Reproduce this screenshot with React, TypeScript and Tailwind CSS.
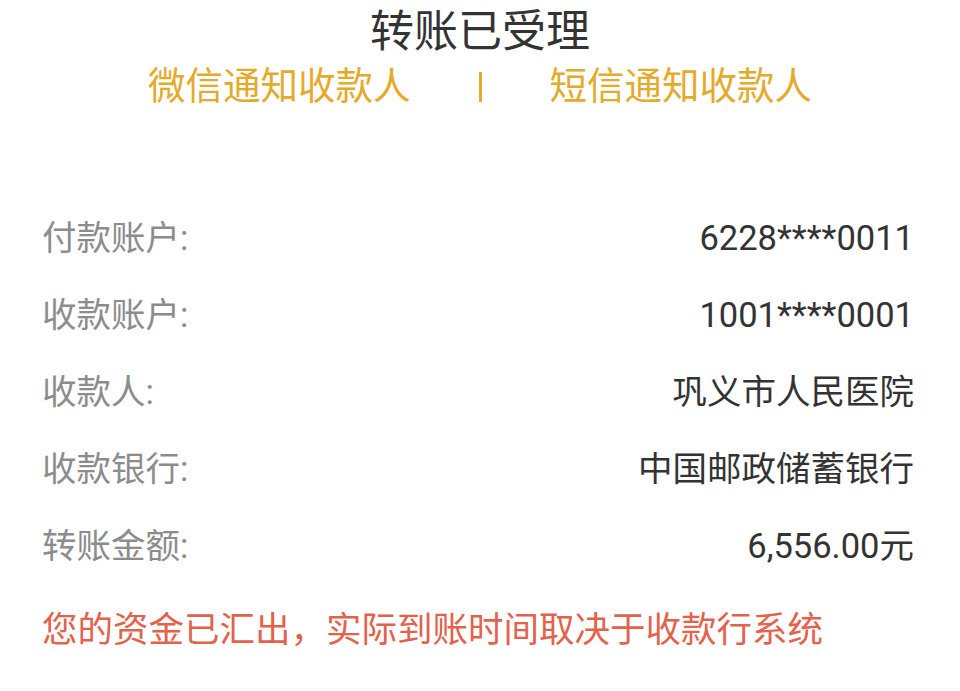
const rows = [
  { label: '付款账户:', value: '6228****0011' },
  { label: '收款账户:', value: '1001****0001' },
  { label: '收款人:', value: '巩义市人民医院' },
  { label: '收款银行:', value: '中国邮政储蓄银行' },
  { label: '转账金额:', value: '6,556.00元' },
]

export default function App() {
  return (
    <main
      className="flex min-h-[691px] w-full flex-col bg-white"
      style={{ fontFamily: 'Roboto, "Noto Sans CJK SC", sans-serif' }}
    >
      <h1 className="mt-[10px] text-center text-[44px] leading-none font-normal text-[#333333]">转账已受理</h1>

      <div className="mt-[14px] flex items-center justify-center text-[37.5px] leading-none text-[#e4aa2c]">
        <span>微信通知收款人</span>
        <span className="mx-[68px] h-[30px] w-[3px] bg-[#e4aa2c]" />
        <span>短信通知收款人</span>
      </div>

      <section className="mt-[95px] flex flex-col pl-[42px] pr-[46px]">
        {rows.map((row) => (
          <div key={row.label} className="flex h-[77px] items-center justify-between">
            <span className="text-[34.5px] text-[#8c8c8c]">{row.label}</span>
            <span className="text-[34.5px] text-[#333333]">{row.value}</span>
          </div>
        ))}
      </section>

      <p className="mt-[27px] pl-[42px] text-[35.5px] leading-none text-[#e2624c]">
        您的资金已汇出，实际到账时间取决于收款行系统
      </p>
    </main>
  )
}
